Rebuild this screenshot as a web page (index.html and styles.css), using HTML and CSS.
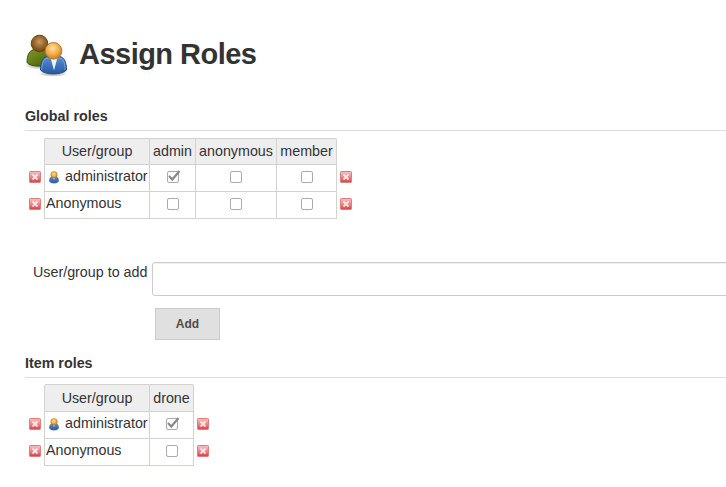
FILE: index.html
```
<!DOCTYPE html>
<html lang="en">
<head>
<meta charset="utf-8">
<title>Assign Roles</title>
<link rel="stylesheet" href="styles.css">
</head>
<body>
<svg class="defs" aria-hidden="true">
  <defs>
    <linearGradient id="red" x1="0" y1="0" x2="0" y2="1"><stop offset="0" stop-color="#f6c3c3"/><stop offset=".5" stop-color="#e98a8c"/><stop offset="1" stop-color="#dc3c42"/></linearGradient>
    <radialGradient id="gold" cx=".45" cy=".35" r=".65"><stop offset="0" stop-color="#ffe0a0"/><stop offset=".55" stop-color="#f2b050"/><stop offset="1" stop-color="#cf7f18"/></radialGradient>
    <radialGradient id="brown" cx=".5" cy=".4" r=".6"><stop offset="0" stop-color="#c39a60"/><stop offset=".6" stop-color="#956329"/><stop offset="1" stop-color="#6f430f"/></radialGradient>
    <linearGradient id="blue" x1="0" y1="0" x2="0" y2="1"><stop offset="0" stop-color="#5c8fcf"/><stop offset="1" stop-color="#2758a4"/></linearGradient>
    <linearGradient id="green" x1="0" y1="0" x2="1" y2="1"><stop offset="0" stop-color="#809a2c"/><stop offset="1" stop-color="#445c05"/></linearGradient>
    <radialGradient id="shade"><stop offset="0" stop-color="#000" stop-opacity=".45"/><stop offset="1" stop-color="#000" stop-opacity="0"/></radialGradient>
    <symbol id="remove" viewBox="0 0 12 12"><rect x=".5" y=".5" width="11" height="11" rx=".8" fill="url(#red)" stroke="#df7c7f"/><path d="M3.500 3.500l5 5M8.500 3.500L3.500 8.500" stroke="#fff" stroke-width="1.800" opacity=".8"/></symbol>
    <symbol id="person" viewBox="0 0 10 13"><ellipse cx="5" cy="11.700" rx="5" ry="1.300" fill="url(#shade)"/><path d="M.5 10.300Q.5 6 3 6h4q2.500 0 2.500 4.300Q8.500 11.800 5 11.800T.5 10.300z" fill="url(#blue)" stroke="#28508c" stroke-width=".6"/><path d="M4 6h2l-1 3z" fill="#dce8f4"/><circle cx="5" cy="3.800" r="3.200" fill="url(#gold)" stroke="#b77318" stroke-width=".6"/></symbol>
  </defs>
</svg>
<main>
  <header class="title">
    <svg class="people" viewBox="0 0 44 44">
      <ellipse cx="14" cy="31.500" rx="14" ry="4" fill="url(#shade)"/>
      <path d="M2 28.500C2 21 4.500 15.500 10 15.500h10c5 0 7 6 7 13C24 33 5 33.500 2 28.500z" fill="url(#green)" stroke="#3d5108"/>
      <circle cx="14.500" cy="9.500" r="8.300" fill="url(#brown)" stroke="#694114"/>
      <ellipse cx="28" cy="39.800" rx="15" ry="3" fill="url(#shade)"/>
      <path d="M15.500 36C15.500 28 18 22.500 23 22.500h11c5 0 7.500 5.500 7.500 13.500C38 41 19 41 15.500 36z" fill="url(#blue)" stroke="#244b86"/>
      <path d="M16.700 35.800C16.800 29 19 24 23.500 24h10c4.500 0 6.500 4.500 6.700 11.800" fill="none" stroke="#84acdf" stroke-width=".8"/>
      <path d="M25.500 23.500h7l-3.500 13z" fill="#edf2f7"/>
      <circle cx="28.500" cy="16.800" r="8.300" fill="url(#gold)" stroke="#b77520"/>
    </svg>
    <h1>Assign Roles</h1>
  </header>
  <h2>Global roles</h2>
  <div class="roles global">
    <i></i><div class="cell head first">User/group</div><div class="cell head">admin</div><div class="cell head">anonymous</div><div class="cell head last">member</div><i></i>
    <svg class="remove"><use href="#remove"/></svg><div class="cell name first"><svg class="person"><use href="#person"/></svg>administrator</div><div class="cell"><span class="box"><svg class="tick" viewBox="0 0 14 12"><path d="M2 6l3.300 3.500L12.500 1"/></svg></span></div><div class="cell"><span class="box"></span></div><div class="cell"><span class="box"></span></div><svg class="remove end"><use href="#remove"/></svg>
    <svg class="remove"><use href="#remove"/></svg><div class="cell name first">Anonymous</div><div class="cell"><span class="box"></span></div><div class="cell"><span class="box"></span></div><div class="cell"><span class="box"></span></div><svg class="remove end"><use href="#remove"/></svg>
  </div>
  <div class="add-row"><label for="user">User/group to add</label><input id="user" type="text"></div>
  <button type="button">Add</button>
  <h2>Item roles</h2>
  <div class="roles item">
    <i></i><div class="cell head first">User/group</div><div class="cell head last">drone</div><i></i>
    <svg class="remove"><use href="#remove"/></svg><div class="cell name first"><svg class="person"><use href="#person"/></svg>administrator</div><div class="cell"><span class="box"><svg class="tick" viewBox="0 0 14 12"><path d="M2 6l3.300 3.500L12.500 1"/></svg></span></div><svg class="remove end"><use href="#remove"/></svg>
    <svg class="remove"><use href="#remove"/></svg><div class="cell name first">Anonymous</div><div class="cell"><span class="box"></span></div><svg class="remove end"><use href="#remove"/></svg>
  </div>
</main>
</body>
</html>
```
FILE: styles.css
```
* { box-sizing: border-box; }
html, body { margin: 0; }
body { height: 487px; overflow: hidden; background: #fff; color: #333; font: 14.300px/20px "Liberation Sans", Arial, sans-serif; }
.defs { position: absolute; width: 0; height: 0; }
main { padding: 34px 0 0 25px; }
.title { display: flex; height: 44px; }
.people { width: 44px; height: 44px; }
h1 { margin: 0 0 0 10px; font-size: 29px; letter-spacing: -.52px; line-height: 41px; white-space: nowrap; }
h2 { margin: 28px 0 0; height: 25px; font-size: 14.300px; line-height: 20px; border-bottom: 1px solid #ddd; }
.roles { display: grid; width: max-content; }
.global { margin-top: 7px; grid-template: repeat(3, 27px) / 19px 106px 46px 81px 60px 20px; }
.item { margin-top: 6px; grid-template: 28px 27px 27px / 19px 106px 44px 20px; }
.cell { display: flex; align-items: center; justify-content: center; border: solid #d3d3cb; border-width: 0 1px 1px 0; white-space: nowrap; }
.first { border-left-width: 1px; }
.head { border-top-width: 1px; background: #eee; padding-bottom: 1px; }
.head.first { border-top-left-radius: 2px; }
.head.last { border-top-right-radius: 2px; }
.name { justify-content: flex-start; padding: 0 0 5px 1px; }
.person { width: 10px; height: 13px; margin: 4px 6px 0 3px; }
.remove { width: 12px; height: 12px; margin: 6px 0 0 4px; }
.end { margin-left: 3px; }
.box { display: block; position: relative; width: 12px; height: 12px; margin-bottom: 3px; border: 1px solid #aaa; border-radius: 2px; background: #fff; }
.tick { position: absolute; left: -1px; top: -2px; width: 14px; height: 12px; fill: none; stroke: #888; stroke-width: 2.200; }
.add-row { display: flex; margin-top: 43px; height: 34px; }
label { flex: 0 0 127px; padding-left: 8px; white-space: nowrap; }
input { flex: 0 0 600px; height: 34px; border: 1px solid #ccc; border-radius: 3px; box-shadow: inset 0 1px 1px #eee; }
button { display: block; width: 65px; height: 32px; margin: 12px 0 0 130px; padding: 0; border: 1px solid #ccc; background: #e0e0e0; color: #4d4d45; font: bold 12px "Liberation Sans", Arial, sans-serif; }
button + h2 { margin-top: 13px; }
```
